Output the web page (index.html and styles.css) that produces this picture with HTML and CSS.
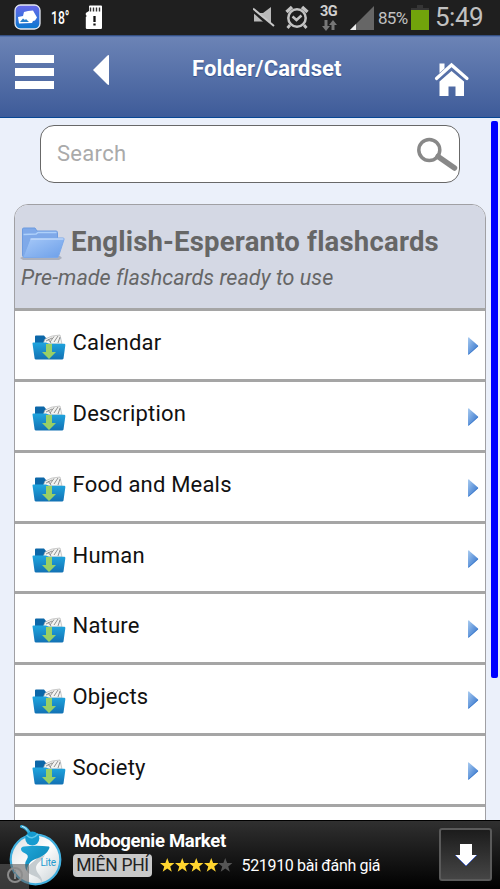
FILE: index.html
```html
<!DOCTYPE html>
<html lang="en">
<head>
<meta charset="utf-8">
<title>Folder/Cardset</title>
<link rel="stylesheet" href="styles.css">
</head>
<body>
<svg class="defs" aria-hidden="true">
  <defs>
    <linearGradient id="folderFront" x1="0" y1="0" x2="0" y2="1"><stop offset="0" stop-color="#20a6df"/><stop offset="1" stop-color="#1271b4"/></linearGradient>
    <linearGradient id="arrowBlue" x1="0" y1="0" x2="1" y2="1"><stop offset="0" stop-color="#a9cbf0"/><stop offset=".5" stop-color="#6599dc"/><stop offset="1" stop-color="#2f6fc6"/></linearGradient>
    <symbol id="download-folder" viewBox="0 0 34 27">
      <path d="M3 10V2.500Q3 1.500 4 1.500H12L14 4H29V12H3Z" fill="#0c67a8"/>
      <path d="M11 10L13 5L20 2L28 1L30 10Z" fill="#f3f3f1" stroke="#aaa" stroke-width=".6"/>
      <path d="M14 7L20 4M18 8L22 2.500M22 8L26 2M26 9L28 3M16 5l3 4" stroke="#858585" stroke-width=".9"/>
      <path d="M.5 9.500Q.3 8.500 1.500 8.500H14L17 9.800H32.500Q33.600 9.800 33.300 11.500L31.500 24.500Q31.300 25.500 30 25.500H4Q2.800 25.500 2.600 24.500Z" fill="url(#folderFront)"/>
      <path d="M14 10h6v8h4l-7 7-7-7h4Z" fill="#98cf66"/>
    </symbol>
    <symbol id="row-arrow" viewBox="0 0 11 18">
      <path d="M.5 .8Q.5 0 1.300 .6L10.500 8.500Q11 9 10.500 9.500L1.500 17.500Q.5 18 .5 17Z" fill="url(#arrowBlue)"/>
      <path d="M1 17.200L10.300 9" stroke="#3f7bcb" stroke-width=".8"/>
    </symbol>
    <symbol id="star" viewBox="0 0 20 20"><path d="M10 0L12.600 7H20L14.100 11.600L16.300 19L10 14.600L3.700 19L5.900 11.600L0 7H7.400Z"/></symbol>
  </defs>
</svg>

<div class="status">
  <svg class="status-app" width="27" height="26" viewBox="0 0 27 26">
    <defs><linearGradient id="app" x1="0" y1="0" x2="0" y2="1"><stop stop-color="#6b68ec"/><stop offset="1" stop-color="#0878ce"/></linearGradient></defs>
    <rect x="1" y="1" width="25" height="24" rx="5.500" fill="url(#app)" stroke="#e4e8f2" stroke-width="1.300"/>
    <path d="M4 13l5-1 1-4 4-1 5-.5 4 7-2 3-2 .5-1 2-13 .5Z" fill="#fff"/>
    <path d="M6 18l3-3.500 2 1.500 1-1 3 3Z" fill="#287fca"/>
  </svg>
  <span class="temp">18°</span>
  <svg class="sd" width="18" height="25" viewBox="0 0 18 25">
    <path d="M4 1.500Q4 .5 5 .5H16Q17 .5 17 1.500V22.500Q17 24 16 24H2Q.8 24 .8 23V12l1-1-1-1V8L4 6Z" fill="#fff"/>
    <path d="M5.500 2.500v4M8.500 2.500v4M11.500 2.500v4M14.500 2.500v4" stroke="#333" stroke-width="1.400"/>
    <path d="M9.500 11v6M9.500 18.500v2" stroke="#111" stroke-width="2.300"/>
  </svg>
  <span class="grow"></span>
  <svg class="mute" width="23" height="23" viewBox="0 0 23 23">
    <path d="M1 6H10L18 0V19L10 14.500H1Z" fill="#b9b9b9"/>
    <path d="M0 3L20 21" stroke="#202020" stroke-width="4"/><path d="M0 1.500L21 19" stroke="#c8c8c8" stroke-width="2"/>
  </svg>
  <svg class="alarm" width="24" height="25" viewBox="0 0 24 25">
    <g fill="none" stroke="#c3c3c3" stroke-width="2.500"><circle cx="12" cy="13" r="8.700"/><path d="M7.500 11.500l4 3.500 5-4.500"/><path d="M1.500 7L7 2M17 2l5.500 5" stroke-width="3.400"/><path d="M5 20l-2.500 3M19 20l2.500 3" stroke-width="2.800"/></g>
  </svg>
  <span class="network"><b>3G</b>
    <svg width="15" height="11" viewBox="0 0 15 11"><path d="M2.500 0H5.500V6H8L4 11 0 6H2.500ZM9.500 10H12.500V5H15L11 0 7 5H9.500Z" fill="#777"/></svg>
  </span>
  <svg class="signal" width="24" height="24" viewBox="0 0 24 24"><path d="M0 24L24 0V24Z" fill="#666"/><path d="M0 24L6 18V24Z" fill="#eee"/></svg>
  <span class="percent">85%</span>
  <svg class="battery" width="18" height="25" viewBox="0 0 18 25"><path d="M6 0h6v3h6v3H0V3h6Z" fill="#353535"/><path d="M0 5h18v20H0Z" fill="#71a30b"/></svg>
  <span class="clock">5:49</span>
</div>

<header class="toolbar">
  <div class="menu"><i></i><i></i><i></i></div>
  <svg class="back" width="16" height="30" viewBox="0 0 16 30"><path d="M0 15L14.500 .5L16 0V30L14.500 29.500Z" fill="#fff"/></svg>
  <h1>Folder/Cardset</h1>
  <svg class="home" width="36" height="37" viewBox="0 0 36 37">
    <g fill="#fff"><path d="M5.500 2.500h5v5l-5 4.500Z"/><path d="M5.500 20.500L17.500 10L30 20.500V35H21.500V25.500H14.500V35H5.500Z"/></g>
    <path d="M2.500 17.500L17.500 4L33 17.500" fill="none" stroke="#fff" stroke-width="3.200" stroke-linecap="round"/>
  </svg>
</header>

<main class="content">
  <div class="scrollbar"></div>
  <div class="search"><span>Search</span>
    <svg width="43" height="34" viewBox="0 0 43 34"><g fill="none" stroke="#888"><circle cx="13.300" cy="13" r="10.500" stroke-width="3.500"/><path d="M22 19.500L38.500 31" stroke-width="5.500" stroke-linecap="round"/></g></svg>
  </div>
  <section class="list">
    <div class="list-head">
      <div class="title">
        <svg width="46" height="34" viewBox="0 0 46 34">
          <defs><linearGradient id="open" x1="0" y1="0" x2="1" y2="1"><stop stop-color="#a7c9f8"/><stop offset="1" stop-color="#6c9fe9"/></linearGradient></defs>
          <path d="M0 32l4-2h36l2 2-3 2H3Z" fill="#9a9fac" opacity=".7"/>
          <path d="M2.500 3Q2.500 2 4 2H15L17 5H36Q37.500 5 37.500 6.500V29L4 31Q2.500 31 2.500 29Z" fill="#7fa9e9" stroke="#6d9bdf"/>
          <path d="M3.500 8.500L16 8 18 6.500H36.500" fill="none" stroke="#add0fa" stroke-width="1.500"/>
          <path d="M10 13Q10.500 12 12 12H43Q44.500 12 44 13.500L38.500 30.500Q38 31.500 37 31.500H4.500Q3 31.500 3.500 30Z" fill="url(#open)" stroke="#7da9e9"/>
          <path d="M10.500 13H43.500" stroke="#d5e6fd"/>
        </svg>
        <h2>English-Esperanto flashcards</h2>
      </div>
      <p>Pre-made flashcards ready to use</p>
    </div>
    <div class="row"><svg class="folder"><use href="#download-folder"/></svg><span>Calendar</span><svg class="arrow"><use href="#row-arrow"/></svg></div>
    <div class="row"><svg class="folder"><use href="#download-folder"/></svg><span>Description</span><svg class="arrow"><use href="#row-arrow"/></svg></div>
    <div class="row"><svg class="folder"><use href="#download-folder"/></svg><span>Food and Meals</span><svg class="arrow"><use href="#row-arrow"/></svg></div>
    <div class="row"><svg class="folder"><use href="#download-folder"/></svg><span>Human</span><svg class="arrow"><use href="#row-arrow"/></svg></div>
    <div class="row"><svg class="folder"><use href="#download-folder"/></svg><span>Nature</span><svg class="arrow"><use href="#row-arrow"/></svg></div>
    <div class="row"><svg class="folder"><use href="#download-folder"/></svg><span>Objects</span><svg class="arrow"><use href="#row-arrow"/></svg></div>
    <div class="row"><svg class="folder"><use href="#download-folder"/></svg><span>Society</span><svg class="arrow"><use href="#row-arrow"/></svg></div>
    <div class="row"></div>
  </section>
</main>

<footer class="ad">
  <svg class="ad-logo" width="64" height="64" viewBox="0 0 64 64">
    <defs><linearGradient id="globe" x1="0" y1="0" x2="1" y2="1"><stop stop-color="#d9dddf"/><stop offset=".5" stop-color="#fff"/><stop offset="1" stop-color="#c5ced2"/></linearGradient>
    <linearGradient id="genie" x1="0" y1="0" x2="1" y2="1"><stop stop-color="#22a9dc"/><stop offset="1" stop-color="#087fae"/></linearGradient></defs>
    <circle cx="35.500" cy="34.500" r="24.800" fill="url(#globe)" stroke="#42b0df" stroke-width="2.200"/>
    <path d="M37 33C34 37 28 39 27 45C26.500 51 41 50 42 58.500C44 52 36 49 36 43C36 38 42 36 45 30Z" fill="#c5ccd0"/>
    <path d="M21 24Q21 22 24 21.500Q36 20 49 21.500Q50 22 49 24C45 33 34 33 30.500 37C28 40 27.500 42 26.500 46Q23.500 39 27 34Q29.500 30 24.500 28Q21 26.500 21 24Z" fill="url(#genie)"/>
    <path d="M21.500 1.500Q26 2 29.500 8" fill="none" stroke="#36b1e0" stroke-width="3" stroke-linecap="round"/>
    <path d="M22 1.200Q25 2 27.500 5" fill="none" stroke="#dff2fa"/>
    <circle cx="32.300" cy="13.500" r="7" fill="#159bd0"/><path d="M26.500 10Q32 16 38 9" fill="none" stroke="#60c7e9" stroke-width="1.500"/>
    <text x="40.500" y="40.500" class="lite">Lite</text>
  </svg>
  <div class="info"><svg width="29" height="25" viewBox="0 0 29 25"><circle cx="15" cy="11" r="7" fill="none" stroke="#8c8c8c" stroke-width="2"/><path d="M15 9.500v5.500M15 6v2" stroke="#8c8c8c" stroke-width="2"/></svg></div>
  <div class="ad-body">
    <b class="ad-title">Mobogenie Market</b>
    <div class="ad-meta"><span class="badge">MIỄN PHÍ</span>
      <span class="stars"><svg><use href="#star"/></svg><svg><use href="#star"/></svg><svg><use href="#star"/></svg><svg><use href="#star"/></svg><svg class="off"><use href="#star"/></svg></span>
      <span class="reviews">521910 bài đánh giá</span></div>
  </div>
  <div class="download"><svg width="24" height="24" viewBox="0 0 24 24"><path d="M6 1H18V12H23L12 23 1 12H6Z" fill="#fff"/><path d="M1 12L12 23L23 12" fill="none" stroke="#4b68c7"/></svg></div>
</footer>
</body>
</html>
```
FILE: styles.css
```css
* { box-sizing: border-box; }
body {
  margin: 0;
  width: 500px;
  height: 889px;
  overflow: hidden;
  display: flex;
  flex-direction: column;
  background: #ebf0fa;
  font-family: Roboto, sans-serif;
  font-variant-ligatures: none;
}
svg { display: block; flex: none; }
h1, h2, p { margin: 0; white-space: nowrap; }
.defs { position: absolute; width: 0; height: 0; }

.status {
  height: 35px;
  flex: none;
  display: flex;
  align-items: flex-start;
  padding-left: 14px;
  background: #1f1f1f;
  color: #c1c1c1;
  white-space: nowrap;
}
.status-app { margin-top: 4px; }
.temp { margin: 5px 0 0 10px; width: 19px; font: 500 19px/25px Roboto, sans-serif; color: #fff; transform: scaleX(.64); transform-origin: left; }
.sd { margin: 5px 0 0 15px; }
.grow { flex: 1; }
.mute { margin: 7px 9px 0 0; }
.alarm { margin: 5px 11px 0 0; }
.network { width: 19px; margin: 4px 11px 0 0; font-size: 14.5px; line-height: 15px; letter-spacing: -.5px; color: #d0d0d0; }
.network b { display: block; }
.network svg { margin: 1px 0 0 2px; }
.signal { margin-top: 6px; }
.percent { width: 33px; margin: 6px 0 0 4px; font-size: 17px; line-height: 24px; letter-spacing: -.7px; }
.battery { margin: 5px 0 0 0; }
.clock { width: 65px; margin-left: 6px; font-size: 26px; line-height: 35px; letter-spacing: -.5px; }

.toolbar {
  height: 83px;
  flex: none;
  display: flex;
  align-items: flex-start;
  padding: 0 30px 0 15px;
  background: linear-gradient(#6c84b6, #3e5b99);
  border-top: 1px solid #354f80;
  border-bottom: 1px solid #084794;
  box-shadow: inset 0 1px #5471ac;
}
.menu { width: 39px; margin-top: 19px; display: grid; gap: 5px; }
.menu i { height: 8px; background: #fff; }
.back { margin: 19px 0 0 39px; }
.toolbar h1 { flex: 1; padding-left: 83px; font-size: 22px; line-height: 26px; letter-spacing: .15px; margin-top: 20px; color: #fff; text-shadow: 0 1px 1px #304f8a; }
.home { margin-top: 25px; }

.content { height: 702px; flex: none; overflow: hidden; position: relative; padding: 7px 14px 0; }
.scrollbar { position: absolute; top: 3px; right: 2px; width: 7px; height: 557px; border-radius: 2px; background: #00f; }
.search {
  height: 58px;
  margin: 0 26px 21px;
  padding: 0 0 0 16px;
  display: flex;
  align-items: center;
  justify-content: space-between;
  border: 1px solid #686868;
  border-radius: 14px;
  background: #fff;
  color: #aaa;
  font-size: 22px;
  letter-spacing: .3px;
}
.search span { margin-top: -1px; }
.list { border: 1px solid #a0a0a4; border-radius: 14px 14px 0 0; background: #fff; overflow: hidden; }
.list-head { height: 103px; background: #d4d8e4; padding: 18px 6px 0 5px; color: #666; }
.title { display: flex; gap: 5px; align-items: center; }
.title svg { margin: 3px 0 0; }
.list h2 { font-size: 27.5px; line-height: 34px; letter-spacing: .2px; }
.list p { padding-left: 1px; margin-top: 4px; font-size: 21.5px; line-height: 28px; letter-spacing: .05px; font-style: italic; }
.row {
  height: 70.86px;
  display: flex;
  border-top: 3px solid #a5a5a5;
  padding: 0 6px 0 17px;
  font-size: 22px;
  line-height: 26px;
  letter-spacing: .2px;
  color: #111;
}
.folder { width: 34px; height: 27px; margin-top: 23px; }
.row span { flex: 1; padding: 19px 0 0 6.500px; }
.arrow { width: 12px; height: 18px; margin-top: 26px; }

.ad {
  height: 69px;
  flex: none;
  position: relative;
  display: flex;
  background: linear-gradient(#303030, #000);
  border-top: 1px solid #000;
  padding-right: 8px;
}
.ad-logo { margin-top: 4px; }
.lite { font: 10px Roboto, sans-serif; letter-spacing: -.3px; fill: #249bcf; }
.info { position: absolute; left: 0; bottom: 0; background: rgba(95, 95, 95, .6); }
.ad-body { flex: 1; padding: 8px 0 0 10px; color: #fff; white-space: nowrap; }
.ad-title { display: block; font-size: 18.5px; line-height: 24px; letter-spacing: -.3px; }
.ad-meta { display: flex; align-items: center; margin-top: 1px; }
.badge { width: 79px; height: 23px; margin-left: -1px; border-radius: 4px; background: #c9c9c9; color: #222; font-size: 17.5px; line-height: 23px; letter-spacing: -.3px; text-align: center; }
.stars { display: flex; margin-left: 8px; }
.stars svg { width: 14.5px; height: 14.5px; fill: #ffd52f; }
.stars .off { fill: #555; }
.reviews { margin-left: 9px; font-size: 16px; letter-spacing: -.33px; }
.download { width: 53px; height: 53px; margin-top: 7px; display: flex; align-items: center; justify-content: center; border: 2px solid #5a5a5a; border-radius: 3px; background: linear-gradient(#1c1c1c, #454545); }
```
